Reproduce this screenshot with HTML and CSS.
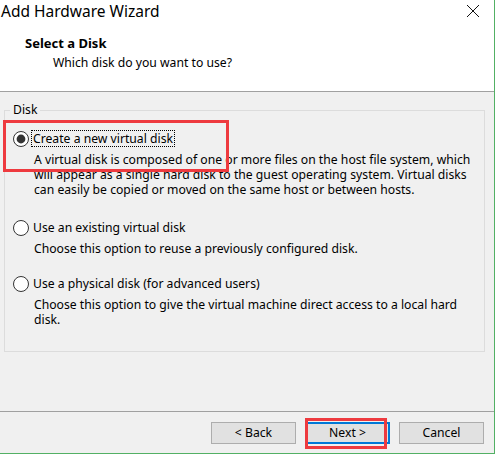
FILE: index.html
```html
<!DOCTYPE html>
<html lang="en">
<head>
<meta charset="utf-8">
<title>Add Hardware Wizard</title>
<link rel="stylesheet" href="styles.css">
</head>
<body>
<div class="window">
  <header class="header">
    <div class="titlebar">
      <h1 class="title">Add Hardware Wizard</h1>
      <svg class="close" viewBox="0 0 12 12" width="12" height="12" aria-label="Close">
        <path d="M0 0 L12 12 M12 0 L0 12" stroke="#111" stroke-width="1" fill="none"/>
      </svg>
    </div>
    <h2 class="heading">Select a Disk</h2>
    <p class="subheading">Which disk do you want to use?</p>
  </header>

  <fieldset class="group">
    <legend class="group-label">Disk</legend>

    <div class="option">
      <div class="radio-row">
        <svg class="radio" viewBox="0 0 16 16" width="16" height="16">
          <circle cx="8" cy="8" r="7.5" fill="#fff" stroke="#333" stroke-width="1"/>
          <circle cx="8" cy="8" r="4.4" fill="#333"/>
        </svg>
        <span class="radio-label radio-label-focus">Create a new virtual disk</span>
      </div>
      <p class="desc desc-tall">A virtual disk is composed of one or more files on the host file system, which will appear as a single hard disk to the guest operating system. Virtual disks can easily be copied or moved on the same host or between hosts.</p>
    </div>

    <div class="option">
      <div class="radio-row">
        <svg class="radio" viewBox="0 0 16 16" width="16" height="16">
          <circle cx="8" cy="8" r="7.5" fill="#fff" stroke="#333" stroke-width="1"/>
        </svg>
        <span class="radio-label">Use an existing virtual disk</span>
      </div>
      <p class="desc">Choose this option to reuse a previously configured disk.</p>
    </div>

    <div class="option">
      <div class="radio-row">
        <svg class="radio" viewBox="0 0 16 16" width="16" height="16">
          <circle cx="8" cy="8" r="7.5" fill="#fff" stroke="#333" stroke-width="1"/>
        </svg>
        <span class="radio-label">Use a physical disk (for advanced users)</span>
      </div>
      <p class="desc">Choose this option to give the virtual machine direct access to a local hard disk.</p>
    </div>
  </fieldset>

  <footer class="footer">
    <button class="btn" type="button">&lt; Back</button>
    <button class="btn btn-default" type="button">Next &gt;</button>
    <button class="btn" type="button">Cancel</button>
  </footer>

  <div class="annot annot-option"></div>
  <div class="annot annot-next"></div>
</div>
</body>
</html>
```
FILE: styles.css
```css
body {
  margin: 0;
}

.window {
  position: relative;
  width: 495px;
  height: 454px;
  box-sizing: border-box;
  display: flex;
  flex-direction: column;
  background: #f0f0f0;
  border-right: 1px solid #52b064;
  border-bottom: 1px solid #52b064;
  font-family: "Noto Sans", "Open Sans", sans-serif;
  font-size: 12.2px;
  line-height: 15px;
  color: #000;
  overflow: hidden;
}

/* header */
.header {
  background: #fff;
  height: 91px;
  border-bottom: 1px solid #a0a0a0;
  flex: none;
}

.titlebar {
  display: flex;
  justify-content: space-between;
  align-items: flex-start;
  padding: 1px 15px 0 1px;
}

.title {
  margin: 0;
  font-size: 15.5px;
  line-height: 20px;
  font-weight: 400;
}

.close {
  display: block;
  margin-top: 4px;
}

.heading {
  margin: 14px 0 0 25px;
  font-size: 13px;
  line-height: 16px;
  font-weight: 700;
}

.subheading {
  margin: 4px 0 0 53px;
}

/* group box */
.group {
  flex: none;
  margin: 10px 9px 0 4px;
  padding: 12px 0 24px 5px;
  border: 1px solid #dcdcdc;
  min-width: 0;
}

.group-label {
  padding: 0 3px;
  line-height: 16px;
}

.option {
  padding-left: 3px;
}

.option + .option {
  margin-top: 19px;
}

.radio-row {
  display: flex;
  align-items: center;
}

.radio {
  display: block;
  flex: none;
}

.radio-label {
  margin-left: 2px;
  padding: 0 1px;
  border: 1px dotted transparent;
  line-height: 15px;
}

.radio-label-focus {
  border-color: #000;
}

.desc {
  margin: 5px 0 0 21px;
  padding-right: 4px;
  max-width: 446px;
}

.desc-tall {
  min-height: 48px;
}

/* footer */
.footer {
  margin-top: auto;
  flex: none;
  display: flex;
  justify-content: flex-end;
  gap: 9px;
  padding: 10px 10px 9px;
  border-top: 1px solid #a0a0a0;
}

.btn {
  width: 85px;
  height: 22px;
  box-sizing: border-box;
  padding: 0;
  border: 1px solid #adadad;
  background: #e1e1e1;
  font: inherit;
  line-height: 20px;
  color: #000;
}

.btn-default {
  border: 2px solid #0078d7;
  line-height: 18px;
}

/* red annotation boxes drawn over the dialog */
.annot {
  position: absolute;
  box-sizing: border-box;
  border: 3px solid #ee3a3f;
  pointer-events: none;
}

.annot-option {
  left: 3px;
  top: 120px;
  width: 226px;
  height: 52px;
}

.annot-next {
  left: 305px;
  top: 418px;
  width: 82px;
  height: 31px;
}
```
